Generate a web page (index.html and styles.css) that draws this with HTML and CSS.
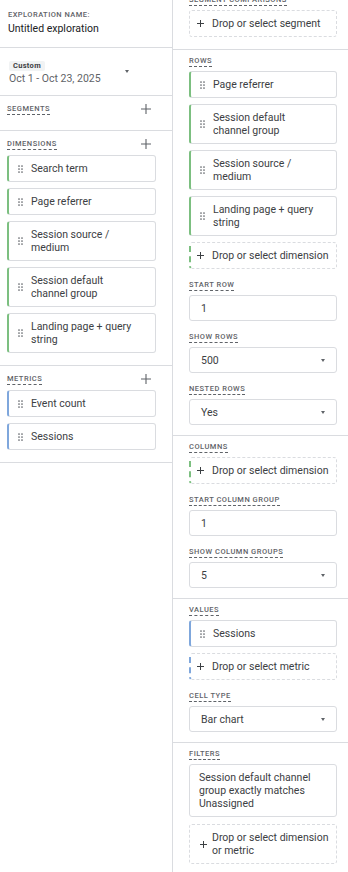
FILE: index.html
```html
<!DOCTYPE html>
<html lang="en">
<head>
  <meta charset="UTF-8" />
  <meta name="viewport" content="width=device-width, initial-scale=1.0" />
  <title>Exploration settings</title>
  <link rel="stylesheet" href="styles.css">
</head>
<body>
  <div class="explorer">
    <aside class="variables">
      <section class="panel panel-name">
        <div class="caption">Exploration name:</div>
        <div class="name">Untitled exploration</div>
      </section>

      <section class="panel panel-date">
        <div class="date-picker">
          <div>
            <span class="date-tag">Custom</span>
            <div class="date-range">Oct 1 - Oct 23, 2025</div>
          </div>
          <span class="caret"></span>
        </div>
      </section>

      <section class="panel panel-empty">
        <div class="panel-head">
          <span class="label">Segments</span>
          <span class="add"><svg width="10" height="10" viewBox="0 0 10 10"><path d="M5 0v10M0 5h10" stroke="currentColor" stroke-width="1.1"/></svg></span>
        </div>
      </section>

      <section class="panel">
        <div class="panel-head">
          <span class="label">Dimensions</span>
          <span class="add"><svg width="10" height="10" viewBox="0 0 10 10"><path d="M5 0v10M0 5h10" stroke="currentColor" stroke-width="1.1"/></svg></span>
        </div>
        <div class="chip-list">
          <div class="chip dim"><svg class="grip" width="5" height="8" viewBox="0 0 5 8"><circle cx="1" cy="1" r=".85"/><circle cx="4" cy="1" r=".85"/><circle cx="1" cy="4" r=".85"/><circle cx="4" cy="4" r=".85"/><circle cx="1" cy="7" r=".85"/><circle cx="4" cy="7" r=".85"/></svg><span>Search term</span></div>
          <div class="chip dim"><svg class="grip" width="5" height="8" viewBox="0 0 5 8"><circle cx="1" cy="1" r=".85"/><circle cx="4" cy="1" r=".85"/><circle cx="1" cy="4" r=".85"/><circle cx="4" cy="4" r=".85"/><circle cx="1" cy="7" r=".85"/><circle cx="4" cy="7" r=".85"/></svg><span>Page referrer</span></div>
          <div class="chip dim"><svg class="grip" width="5" height="8" viewBox="0 0 5 8"><circle cx="1" cy="1" r=".85"/><circle cx="4" cy="1" r=".85"/><circle cx="1" cy="4" r=".85"/><circle cx="4" cy="4" r=".85"/><circle cx="1" cy="7" r=".85"/><circle cx="4" cy="7" r=".85"/></svg><span>Session source / medium</span></div>
          <div class="chip dim"><svg class="grip" width="5" height="8" viewBox="0 0 5 8"><circle cx="1" cy="1" r=".85"/><circle cx="4" cy="1" r=".85"/><circle cx="1" cy="4" r=".85"/><circle cx="4" cy="4" r=".85"/><circle cx="1" cy="7" r=".85"/><circle cx="4" cy="7" r=".85"/></svg><span>Session default channel group</span></div>
          <div class="chip dim"><svg class="grip" width="5" height="8" viewBox="0 0 5 8"><circle cx="1" cy="1" r=".85"/><circle cx="4" cy="1" r=".85"/><circle cx="1" cy="4" r=".85"/><circle cx="4" cy="4" r=".85"/><circle cx="1" cy="7" r=".85"/><circle cx="4" cy="7" r=".85"/></svg><span>Landing page + query string</span></div>
        </div>
      </section>

      <section class="panel">
        <div class="panel-head">
          <span class="label">Metrics</span>
          <span class="add"><svg width="10" height="10" viewBox="0 0 10 10"><path d="M5 0v10M0 5h10" stroke="currentColor" stroke-width="1.1"/></svg></span>
        </div>
        <div class="chip-list">
          <div class="chip met"><svg class="grip" width="5" height="8" viewBox="0 0 5 8"><circle cx="1" cy="1" r=".85"/><circle cx="4" cy="1" r=".85"/><circle cx="1" cy="4" r=".85"/><circle cx="4" cy="4" r=".85"/><circle cx="1" cy="7" r=".85"/><circle cx="4" cy="7" r=".85"/></svg><span>Event count</span></div>
          <div class="chip met"><svg class="grip" width="5" height="8" viewBox="0 0 5 8"><circle cx="1" cy="1" r=".85"/><circle cx="4" cy="1" r=".85"/><circle cx="1" cy="4" r=".85"/><circle cx="4" cy="4" r=".85"/><circle cx="1" cy="7" r=".85"/><circle cx="4" cy="7" r=".85"/></svg><span>Sessions</span></div>
        </div>
      </section>
    </aside>

    <main class="settings">
      <section class="panel panel-first">
        <span class="label">Segment comparisons</span>
        <div class="drop"><svg class="plus" width="7" height="7" viewBox="0 0 7 7"><path d="M3.5 0v7M0 3.5h7" stroke="currentColor" stroke-width="1"/></svg><span>Drop or select segment</span></div>
      </section>

      <section class="panel">
        <span class="label">Rows</span>
        <div class="chip-list">
          <div class="chip dim"><svg class="grip" width="5" height="8" viewBox="0 0 5 8"><circle cx="1" cy="1" r=".85"/><circle cx="4" cy="1" r=".85"/><circle cx="1" cy="4" r=".85"/><circle cx="4" cy="4" r=".85"/><circle cx="1" cy="7" r=".85"/><circle cx="4" cy="7" r=".85"/></svg><span>Page referrer</span></div>
          <div class="chip dim"><svg class="grip" width="5" height="8" viewBox="0 0 5 8"><circle cx="1" cy="1" r=".85"/><circle cx="4" cy="1" r=".85"/><circle cx="1" cy="4" r=".85"/><circle cx="4" cy="4" r=".85"/><circle cx="1" cy="7" r=".85"/><circle cx="4" cy="7" r=".85"/></svg><span>Session default channel group</span></div>
          <div class="chip dim"><svg class="grip" width="5" height="8" viewBox="0 0 5 8"><circle cx="1" cy="1" r=".85"/><circle cx="4" cy="1" r=".85"/><circle cx="1" cy="4" r=".85"/><circle cx="4" cy="4" r=".85"/><circle cx="1" cy="7" r=".85"/><circle cx="4" cy="7" r=".85"/></svg><span>Session source / medium</span></div>
          <div class="chip dim"><svg class="grip" width="5" height="8" viewBox="0 0 5 8"><circle cx="1" cy="1" r=".85"/><circle cx="4" cy="1" r=".85"/><circle cx="1" cy="4" r=".85"/><circle cx="4" cy="4" r=".85"/><circle cx="1" cy="7" r=".85"/><circle cx="4" cy="7" r=".85"/></svg><span>Landing page + query string</span></div>
          <div class="drop dim"><svg class="plus" width="7" height="7" viewBox="0 0 7 7"><path d="M3.5 0v7M0 3.5h7" stroke="currentColor" stroke-width="1"/></svg><span>Drop or select dimension</span></div>
        </div>
        <span class="label sub">Start row</span>
        <div class="field">1</div>
        <span class="label sub">Show rows</span>
        <div class="field select"><span>500</span><span class="caret"></span></div>
        <span class="label sub">Nested rows</span>
        <div class="field select"><span>Yes</span><span class="caret"></span></div>
      </section>

      <section class="panel">
        <span class="label">Columns</span>
        <div class="drop dim"><svg class="plus" width="7" height="7" viewBox="0 0 7 7"><path d="M3.5 0v7M0 3.5h7" stroke="currentColor" stroke-width="1"/></svg><span>Drop or select dimension</span></div>
        <span class="label sub">Start column group</span>
        <div class="field">1</div>
        <span class="label sub">Show column groups</span>
        <div class="field select"><span>5</span><span class="caret"></span></div>
      </section>

      <section class="panel">
        <span class="label">Values</span>
        <div class="chip-list">
          <div class="chip met"><svg class="grip" width="5" height="8" viewBox="0 0 5 8"><circle cx="1" cy="1" r=".85"/><circle cx="4" cy="1" r=".85"/><circle cx="1" cy="4" r=".85"/><circle cx="4" cy="4" r=".85"/><circle cx="1" cy="7" r=".85"/><circle cx="4" cy="7" r=".85"/></svg><span>Sessions</span></div>
          <div class="drop met"><svg class="plus" width="7" height="7" viewBox="0 0 7 7"><path d="M3.5 0v7M0 3.5h7" stroke="currentColor" stroke-width="1"/></svg><span>Drop or select metric</span></div>
        </div>
        <span class="label sub">Cell type</span>
        <div class="field select"><span>Bar chart</span><span class="caret"></span></div>
      </section>

      <section class="panel">
        <span class="label">Filters</span>
        <div class="chip-list filters">
          <div class="filter">Session default channel group exactly matches Unassigned</div>
          <div class="drop"><svg class="plus" width="7" height="7" viewBox="0 0 7 7"><path d="M3.5 0v7M0 3.5h7" stroke="currentColor" stroke-width="1"/></svg><span>Drop or select dimension or metric</span></div>
        </div>
      </section>
    </main>
  </div>
</body>
</html>
```

FILE: styles.css
```css
* { box-sizing: border-box; }
html, body { height: 100%; }
body {
  margin: 0;
  font-family: Roboto, 'Noto Sans', sans-serif;
  font-size: 10.5px;
  color: #3c4043;
  background: #fff;
  overflow: hidden;
}

.explorer {
  display: flex;
  align-items: flex-start;
  min-height: 100%;
}

.variables {
  width: 173px;
  flex: none;
  align-self: stretch;
  border-right: 1px solid #dadce0;
}
.settings {
  flex: 1;
  min-width: 0;
}

.panel {
  display: flex;
  flex-direction: column;
  align-items: flex-start;
  border-bottom: 1px solid #dadce0;
}
.variables .panel { padding: 8px 16px 12px 7px; }
.settings .panel { padding: 6px 11px 10px 16px; }
.settings .panel-first { margin-top: -11px; padding-bottom: 12px; }

/* exploration name + date */
.variables .panel-name { padding: 10px 16px 12px 8px; }
.caption {
  font-size: 7.5px;
  letter-spacing: .45px;
  text-transform: uppercase;
  color: #5f6368;
  font-weight: 500;
  line-height: 10px;
}
.name { margin-top: 2px; line-height: 13px; color: #202124; }

.variables .panel-date { padding: 10px 43px 10px 9px; align-items: stretch; }
.date-picker {
  display: flex;
  justify-content: space-between;
  align-items: center;
}
.date-tag {
  display: inline-block;
  background: #f1f3f4;
  color: #3c4043;
  font-size: 7.5px;
  font-weight: 700;
  letter-spacing: .3px;
  line-height: 10px;
  padding: 0 4px;
  border-radius: 2px;
}
.date-range { margin-top: 1px; color: #5f6368; line-height: 13px; }

.caret {
  width: 0;
  height: 0;
  border-left: 2.5px solid transparent;
  border-right: 2.5px solid transparent;
  border-top: 3px solid #5f6368;
}

/* section labels */
.label {
  display: inline-block;
  font-size: 7.5px;
  letter-spacing: .5px;
  text-transform: uppercase;
  color: #5f6368;
  font-weight: 500;
  line-height: 10px;
  border-bottom: 1px dashed #5f6368;
  margin-bottom: 4px;
}
.label.sub { margin-top: 11px; }

.panel-head {
  align-self: stretch;
  display: flex;
  justify-content: space-between;
  align-items: flex-start;
  margin-bottom: 1px;
}
.add {
  width: 20px;
  display: flex;
  justify-content: center;
  color: #5f6368;
}
.variables .panel-empty { padding-bottom: 10px; }

/* chips */
.chip-list {
  align-self: stretch;
  display: flex;
  flex-direction: column;
  gap: 6px;
}
.chip-list.filters { gap: 7px; }
.chip, .drop, .field, .filter {
  align-self: stretch;
  border: 1px solid #dadce0;
  border-radius: 3px;
  line-height: 13px;
  color: #3c4043;
}
.chip {
  display: flex;
  align-items: center;
  gap: 8px;
  padding: 6px 22px 6px 9px;
}
.chip.dim { border-left: 2px solid #7cbf80; }
.chip.met { border-left: 2px solid #7fa7dc; }
.grip { flex: none; fill: #5f6368; }

.drop {
  display: flex;
  align-items: center;
  gap: 8px;
  padding: 6px 4px 6px 7px;
  border-style: dashed;
}
.drop.dim { border-left: 2px dashed #7cbf80; padding-left: 6px; }
.drop.met { border-left: 2px dashed #7fa7dc; padding-left: 6px; }
.plus { flex: none; color: #3c4043; }
.filters .drop { padding-left: 10px; padding-right: 3px; gap: 5px; }

.field {
  display: flex;
  justify-content: space-between;
  align-items: center;
  padding: 5.5px 11px;
}

.filter {
  padding: 6px 18px 6px 9px;
}
```
